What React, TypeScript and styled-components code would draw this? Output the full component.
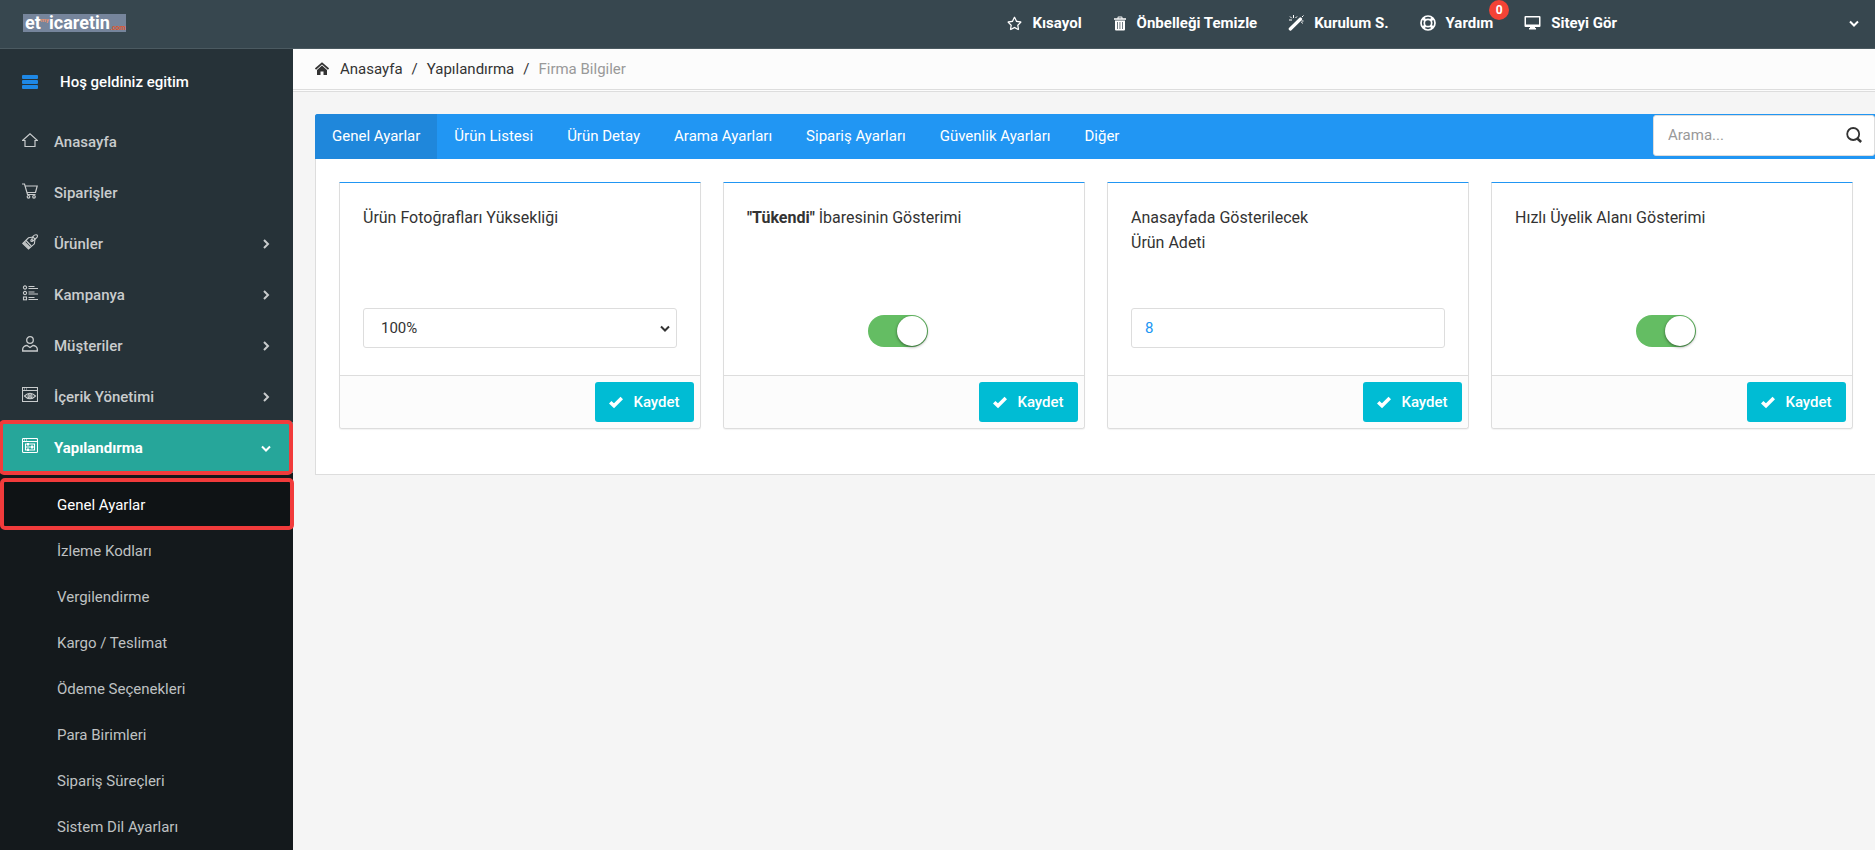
import React from "react";
import styled, { createGlobalStyle, css } from "styled-components";
import { FaRegStar } from "react-icons/fa";

const GlobalStyle = createGlobalStyle`
  *, *::before, *::after { box-sizing: border-box; }
  body {
    margin: 0;
    background: #f5f5f5;
    color: #333;
    font-family: Roboto, "Liberation Sans", sans-serif;
    font-size: 15px;
    line-height: 20px;
  }
  a { color: inherit; text-decoration: none; }
  button, input, select { font: inherit; }
  ul, ol { list-style: none; margin: 0; padding: 0; }
`;

const Page = styled.div`
  display: flex;
  flex-direction: column;
  min-height: 100vh;
`;

const Header = styled.header`
  display: flex;
  align-items: center;
  height: 49px;
  padding: 0 13px 2px 23px;
  background: #37474f;
  border-bottom: 1px solid #4b5a61;
  color: #fff;
`;

const Logo = styled.a`
  display: flex;
  width: 103px;
  height: 18px;
  padding-left: 2px;
  background: #76859c;
  font-size: 18px;
  font-weight: 700;
  line-height: 18px;
  white-space: nowrap;
`;

const LogoSuffix = styled.span`
  align-self: flex-end;
  color: #e2552b;
  font-size: 7px;
  line-height: 8px;
`;

const LogoMark = styled.span`
  padding-top: 2px;
  color: #f0936c;
  font-size: 6px;
  line-height: 7px;
`;

const TopNav = styled.nav`
  display: flex;
  margin-left: auto;
  margin-right: 229px;
  gap: 31px;
  font-weight: 700;
`;

const TopLink = styled.a`
  position: relative;
  display: flex;
  align-items: center;
  gap: 10px;
  white-space: nowrap;
`;

const Badge = styled.span`
  position: absolute;
  top: -13px;
  right: -16px;
  width: 20px;
  height: 20px;
  border-radius: 50%;
  background: #f44336;
  font-size: 12px;
  text-align: center;
`;

const PlainButton = styled.button`
  display: flex;
  align-items: center;
  padding: 0;
  border: 0;
  background: none;
  color: inherit;
  cursor: pointer;
`;

const Body = styled.div`
  display: flex;
  flex: 1;
`;

const Sidebar = styled.aside`
  position: relative;
  z-index: 1;
  display: flex;
  flex-direction: column;
  flex: 0 0 293px;
  background: #263238;
`;

const UserRow = styled.div`
  display: flex;
  align-items: center;
  gap: 22px;
  height: 67px;
  padding: 0 0 2px 22px;
  color: #fff;
  font-weight: 500;
`;

const highlight = css`
  &::after {
    content: "";
    position: absolute;
    border: 4px solid #f13b3b;
    border-radius: 5px;
    pointer-events: none;
  }
`;

const MenuLink = styled.a<{ $active?: boolean }>`
  position: relative;
  display: flex;
  align-items: center;
  gap: 16px;
  height: 51px;
  padding: 0 19px 0 22px;
  color: ${(p) => (p.$active ? "#fff" : "#c9cccd")};
  background: ${(p) => (p.$active ? "#26a69a" : "transparent")};
  font-weight: ${(p) => (p.$active ? 700 : 500)};
  ${(p) => p.$active && highlight}
  &::after { inset: -2px 0 -2px -1px; }
  > svg:first-child { margin-bottom: 4px; }
  > svg:last-child:not(:first-child) { margin-left: auto; }
`;

const SubMenu = styled.ul`
  flex: 1;
  padding-top: 9px;
  background: #14191c;
`;

const SubLink = styled.a<{ $active?: boolean }>`
  position: relative;
  display: flex;
  align-items: center;
  height: 46px;
  padding-left: 57px;
  color: ${(p) => (p.$active ? "#fff" : "#bfc1c2")};
  background: ${(p) => (p.$active ? "#0f1315" : "transparent")};
  ${(p) => p.$active && highlight}
  &::after { inset: -4px -1px -2px 0; }
`;

const Main = styled.main`
  flex: 1;
  min-width: 0;
`;

const Breadcrumb = styled.nav`
  display: flex;
  align-items: center;
  height: 43px;
  padding: 0 22px 1px;
  background: #fcfcfc;
  border-bottom: 3px double #ddd;
`;

const Crumbs = styled.ol`
  display: flex;
  margin-left: 11px;
  li + li::before { content: "/"; padding: 0 9px; color: #333; }
`;

const Current = styled.li`
  color: #999;
`;

const Panel = styled.section`
  margin: 22px 0 0 22px;
  border: 1px solid #ddd;
  border-width: 0 0 1px 1px;
  border-radius: 3px 0 0 0;
  background: #fff;
`;

const TabBar = styled.div`
  display: flex;
  height: 45px;
  margin-left: -1px;
  border-radius: 3px 0 0 0;
  background: #2196f3;
  overflow: hidden;
`;

const Tab = styled.button<{ $active?: boolean }>`
  padding: 0 17px 2px;
  border: 0;
  background: ${(p) => (p.$active ? "#1f87db" : "transparent")};
  color: #fff;
  cursor: pointer;
  white-space: nowrap;
`;

const Search = styled.form`
  display: flex;
  align-items: center;
  width: 222px;
  height: 41px;
  margin: 1px 0 0 auto;
  padding: 0 12px 2px 14px;
  border: 1px solid #ddd;
  border-radius: 3px;
  background: #fff;
  color: #333;
`;

const SearchInput = styled.input`
  flex: 1;
  min-width: 0;
  padding: 0;
  border: 0;
  outline: 0;
  background: none;
  &::placeholder { color: #999; opacity: 1; }
`;

const Cards = styled.div`
  display: grid;
  grid-template-columns: repeat(4, 1fr);
  gap: 22px;
  padding: 23px 22px 45px 23px;
`;

const Card = styled.article`
  display: flex;
  flex-direction: column;
  border: 1px solid #ddd;
  border-top-color: #2196f3;
  border-radius: 0 0 3px 3px;
  box-shadow: 0 1px 1px rgba(0, 0, 0, 0.05);
`;

const CardBody = styled.div`
  flex: 1;
  padding: 22px 23px 26px;
`;

const CardTitle = styled.label`
  display: block;
  min-height: 102px;
  font-size: 16px;
  line-height: 25px;
`;

const Control = styled.div`
  display: flex;
  align-items: center;
  height: 42px;
`;

const ToggleRow = styled(Control)`
  justify-content: center;
  padding: 6px 12px 0 0;
`;

const fieldBox = css`
  width: 100%;
  height: 40px;
  border: 1px solid #ddd;
  border-radius: 3px;
  background: #fff;
`;

const SelectWrap = styled.div`
  position: relative;
  width: 100%;
  > svg { position: absolute; right: 4px; top: 12px; pointer-events: none; }
`;

const Select = styled.select`
  ${fieldBox}
  display: block;
  padding: 0 17px;
  appearance: none;
  color: #333;
`;

const TextInput = styled.input`
  ${fieldBox}
  padding: 0 13px;
  color: #2196f3;
`;

const Toggle = styled.input`
  appearance: none;
  width: 60px;
  height: 32px;
  margin: 0;
  border-radius: 16px;
  background: #bbb;
  cursor: pointer;
  &::before {
    content: "";
    display: block;
    width: 30px;
    height: 30px;
    margin: 1px;
    border-radius: 50%;
    background: #fff;
    box-shadow: 0 1px 3px rgba(0, 0, 0, 0.5);
  }
  &:checked { background: #64bd63; }
  &:checked::before { margin-left: 29px; }
`;

const CardFooter = styled.footer`
  display: flex;
  justify-content: flex-end;
  padding: 6px;
  border-top: 1px solid #ddd;
  border-radius: 0 0 3px 3px;
  background: #fcfcfc;
`;

const SaveButton = styled.button`
  display: flex;
  align-items: center;
  justify-content: center;
  gap: 10px;
  width: 99px;
  height: 40px;
  padding: 0;
  border: 0;
  border-radius: 3px;
  background: #00bcd4;
  color: #fff;
  font-weight: 500;
  cursor: pointer;
`;

const Stroke = ({ size = 16, width = 1, children }: { size?: number; width?: number; children: React.ReactNode }) => (
  <svg width={size} height={size} viewBox="0 0 16 16" fill="none" stroke="currentColor" strokeWidth={width} aria-hidden="true">
    {children}
  </svg>
);

const Chevron = ({ down }: { down?: boolean }) => (
  <Stroke width={2}>
    <path d={down ? "M4 6.5 8 10.5 12 6.5" : "M6 4 10 8 6 12"} />
  </Stroke>
);

const HomeIcon = () => (
  <Stroke width={1.2}><path d="M.5 8.500 8 1.700 15.5 8.500H13v6H3v-6Z" /></Stroke>
);
const CartIcon = () => (
  <Stroke width={1.2}>
    <path d="M0 1h2.500L5.500 11.500h8M3.200 3h12L13.500 9.500H5" />
    <circle cx="6.500" cy="13.800" r="1.300" /><circle cx="12" cy="13.800" r="1.300" />
  </Stroke>
);
const TagIcon = () => (
  <Stroke width={1.1}>
    <path d="M.8 9.500 6.500 3.800 11 3l2 2-.6 4.800L6.500 15Z" />
    <path d="M2.500 8 8 13.500M4 6.500 9.300 12M1.500 9 7.200 14.400" />
    <circle cx="9.800" cy="6.500" r="1" />
    <path d="M10 6.500C9.500 3 12 .7 14 .7s2 2.300 0 3.600L11 7" />
  </Stroke>
);
const ListIcon = () => (
  <Stroke width={1.1}>
    <circle cx="3" cy="2.500" r="1.600" /><circle cx="3" cy="8" r="1.600" />
    <rect x="1.500" y="12" width="3" height="2.800" />
    <path d="M6.500 1.500h6M6.500 3.500H16M6.500 7h6M6.500 9H16M6.500 12.500h6M6.500 14.500H16" />
  </Stroke>
);
const UserIcon = () => (
  <Stroke width={1.3}>
    <circle cx="8" cy="4" r="3.300" />
    <path d="M.700 15V13C.700 11 3 9.500 5 9.500L8 11.500l3-2c2 0 4.300 1.500 4.300 3.500v2Z" />
  </Stroke>
);
const EyeWindowIcon = () => (
  <Stroke width={1.1}>
    <path d="M.5.5h15v14H.5ZM.5 3.500h15M2 2h1M4 2h1" />
    <path d="M2.500 9Q8 3.500 13.500 9 8 14.500 2.500 9Z" />
    <circle cx="8" cy="9" r="2" /><circle cx="8" cy="9" r=".5" />
  </Stroke>
);
const ConfigWindowIcon = () => (
  <Stroke width={1.1}>
    <rect x=".5" y=".5" width="15" height="14" rx="1" />
    <path d="M.5 3.500h15M2 2h1M4 2h1M3 6h10M3 9h10M3 12h10M3.500 5.500v7M12.500 5.500v7" />
    <path d="M6 5v2.500M10 7.500v3M6 10.500V13" strokeWidth="2" />
  </Stroke>
);

const TrashIcon = () => (
  <svg width="14" height="15" viewBox="0 0 14 15" fill="currentColor" aria-hidden="true">
    <path fillRule="evenodd" d="M1 3.800V2.200H4.500V1.500Q4.500.5 5.500.5h3q1 0 1 1v.7H13v1.600ZM5.500 2.200h3v-.7h-3ZM2 4.500h10V13.500q0 1-1 1H3q-1 0-1-1ZM4.200 6v7h.700V6ZM6.600 6v7h.700V6ZM9 6v7h.700V6Z" />
  </svg>
);
const WandIcon = () => (
  <svg width="16" height="16" viewBox="0 0 16 16" fill="none" stroke="currentColor" aria-hidden="true">
    <path d="M2.300 14 12.500 4" strokeWidth="3.200" strokeLinecap="round" />
    <path d="M5.500 0v3M2 1.500l1.800 1.800M9 1.500 7.500 3M1 5h3M14.500 8.500l-1-1.500M15.500 6h-2M15.500.5 14 2" />
  </svg>
);
const RingIcon = () => (
  <Stroke width={1.7}>
    <circle cx="8" cy="8" r="7" /><circle cx="8" cy="8" r="3.700" />
    <path d="M2.900 2.900 5.500 5.500M13.100 2.900 10.500 5.500M2.900 13.100 5.500 10.500M13.100 13.100 10.500 10.500" strokeWidth="2.800" />
  </Stroke>
);
const ScreenIcon = () => (
  <svg width="17" height="16" viewBox="0 0 17 16" fill="currentColor" aria-hidden="true">
    <path fillRule="evenodd" d="M1.500 1h14q1 0 1 1v9q0 1-1 1h-4.500v1h1v1.500H5V13h1v-1H1.500q-1 0-1-1V2q0-1 1-1ZM2 2.500v7h13v-7Z" />
  </svg>
);
const CrumbHomeIcon = () => (
  <svg width="14" height="14" viewBox="0 0 14 14" aria-hidden="true">
    <path d="M.5 7 7 1.300l6.500 5.700" fill="none" stroke="#333" strokeWidth="1.700" />
    <path d="M2 8 7 3.500l5 4.500V13H8.500V9.500h-3V13H2Z" fill="#333" />
  </svg>
);
const BarsIcon = () => (
  <svg width="16" height="14" viewBox="0 0 16 14" fill="#1e88e5" aria-hidden="true">
    <rect y="0" width="16" height="4" rx="1" /><rect y="5" width="16" height="4" rx="1" /><rect y="10" width="16" height="4" rx="1" />
  </svg>
);
const SearchIcon = () => (
  <Stroke width={1.8}>
    <circle cx="7.200" cy="7" r="6" /><path d="m11 11.300 4.200 3.700" strokeWidth="2.600" />
  </Stroke>
);
const CheckIcon = () => (
  <svg width="14" height="14" viewBox="0 0 14 14" fill="none" stroke="currentColor" strokeWidth="3.600" aria-hidden="true">
    <path d="M1.200 7.200 5 10.800 12.800 3" />
  </svg>
);

const menu = [
  { label: "Anasayfa", icon: <HomeIcon /> },
  { label: "Siparişler", icon: <CartIcon /> },
  { label: "Ürünler", icon: <TagIcon />, nested: true },
  { label: "Kampanya", icon: <ListIcon />, nested: true },
  { label: "Müşteriler", icon: <UserIcon />, nested: true },
  { label: "İçerik Yönetimi", icon: <EyeWindowIcon />, nested: true },
  { label: "Yapılandırma", icon: <ConfigWindowIcon />, nested: true, active: true },
];

const subMenu = [
  "Genel Ayarlar", "İzleme Kodları", "Vergilendirme", "Kargo / Teslimat",
  "Ödeme Seçenekleri", "Para Birimleri", "Sipariş Süreçleri", "Sistem Dil Ayarları",
];

const tabs = [
  "Genel Ayarlar", "Ürün Listesi", "Ürün Detay", "Arama Ayarları",
  "Sipariş Ayarları", "Güvenlik Ayarları", "Diğer",
];

function SettingCard({ id, title, children }: { id: string; title: React.ReactNode; children: React.ReactNode }) {
  return (
    <Card>
      <CardBody>
        <CardTitle htmlFor={id}>{title}</CardTitle>
        {children}
      </CardBody>
      <CardFooter>
        <SaveButton type="button"><CheckIcon />Kaydet</SaveButton>
      </CardFooter>
    </Card>
  );
}

export default function App() {
  return (
    <Page>
      <GlobalStyle />
      <Header>
        <Logo href="#">
          <span>et</span><LogoMark>my</LogoMark><span>icaretin</span><LogoSuffix>.com</LogoSuffix>
        </Logo>
        <TopNav>
          <TopLink href="#"><FaRegStar size={15} />Kısayol</TopLink>
          <TopLink href="#"><TrashIcon />Önbelleği Temizle</TopLink>
          <TopLink href="#"><WandIcon />Kurulum S.</TopLink>
          <TopLink href="#"><RingIcon />Yardım<Badge>0</Badge></TopLink>
          <TopLink href="#"><ScreenIcon />Siteyi Gör</TopLink>
        </TopNav>
        <PlainButton type="button" aria-label="Hesap"><Chevron down /></PlainButton>
      </Header>
      <Body>
        <Sidebar>
          <UserRow>
            <PlainButton type="button" aria-label="Menü"><BarsIcon /></PlainButton>
            Hoş geldiniz egitim
          </UserRow>
          <ul>
            {menu.map((m) => (
              <li key={m.label}>
                <MenuLink href="#" $active={m.active}>
                  {m.icon}
                  {m.label}
                  {m.nested && <Chevron down={m.active} />}
                </MenuLink>
              </li>
            ))}
          </ul>
          <SubMenu>
            {subMenu.map((label, i) => (
              <li key={label}><SubLink href="#" $active={i === 0}>{label}</SubLink></li>
            ))}
          </SubMenu>
        </Sidebar>
        <Main>
          <Breadcrumb>
            <CrumbHomeIcon />
            <Crumbs>
              <li><a href="#">Anasayfa</a></li>
              <li><a href="#">Yapılandırma</a></li>
              <Current>Firma Bilgiler</Current>
            </Crumbs>
          </Breadcrumb>
          <Panel>
            <TabBar>
              {tabs.map((label, i) => (
                <Tab key={label} type="button" $active={i === 0}>{label}</Tab>
              ))}
              <Search>
                <SearchInput type="text" placeholder="Arama..." aria-label="Arama" />
                <PlainButton type="button" aria-label="Ara"><SearchIcon /></PlainButton>
              </Search>
            </TabBar>
            <Cards>
              <SettingCard id="photo-height" title="Ürün Fotoğrafları Yüksekliği">
                <Control>
                  <SelectWrap>
                    <Select id="photo-height" defaultValue="100"><option value="100">100%</option></Select>
                    <Chevron down />
                  </SelectWrap>
                </Control>
              </SettingCard>
              <SettingCard id="sold-out" title={<><b>"Tükendi"</b> İbaresinin Gösterimi</>}>
                <ToggleRow><Toggle id="sold-out" type="checkbox" defaultChecked /></ToggleRow>
              </SettingCard>
              <SettingCard id="home-count" title={<>Anasayfada Gösterilecek<br />Ürün Adeti</>}>
                <Control><TextInput id="home-count" type="text" defaultValue="8" /></Control>
              </SettingCard>
              <SettingCard id="quick-signup" title="Hızlı Üyelik Alanı Gösterimi">
                <ToggleRow><Toggle id="quick-signup" type="checkbox" defaultChecked /></ToggleRow>
              </SettingCard>
            </Cards>
          </Panel>
        </Main>
      </Body>
    </Page>
  );
}
